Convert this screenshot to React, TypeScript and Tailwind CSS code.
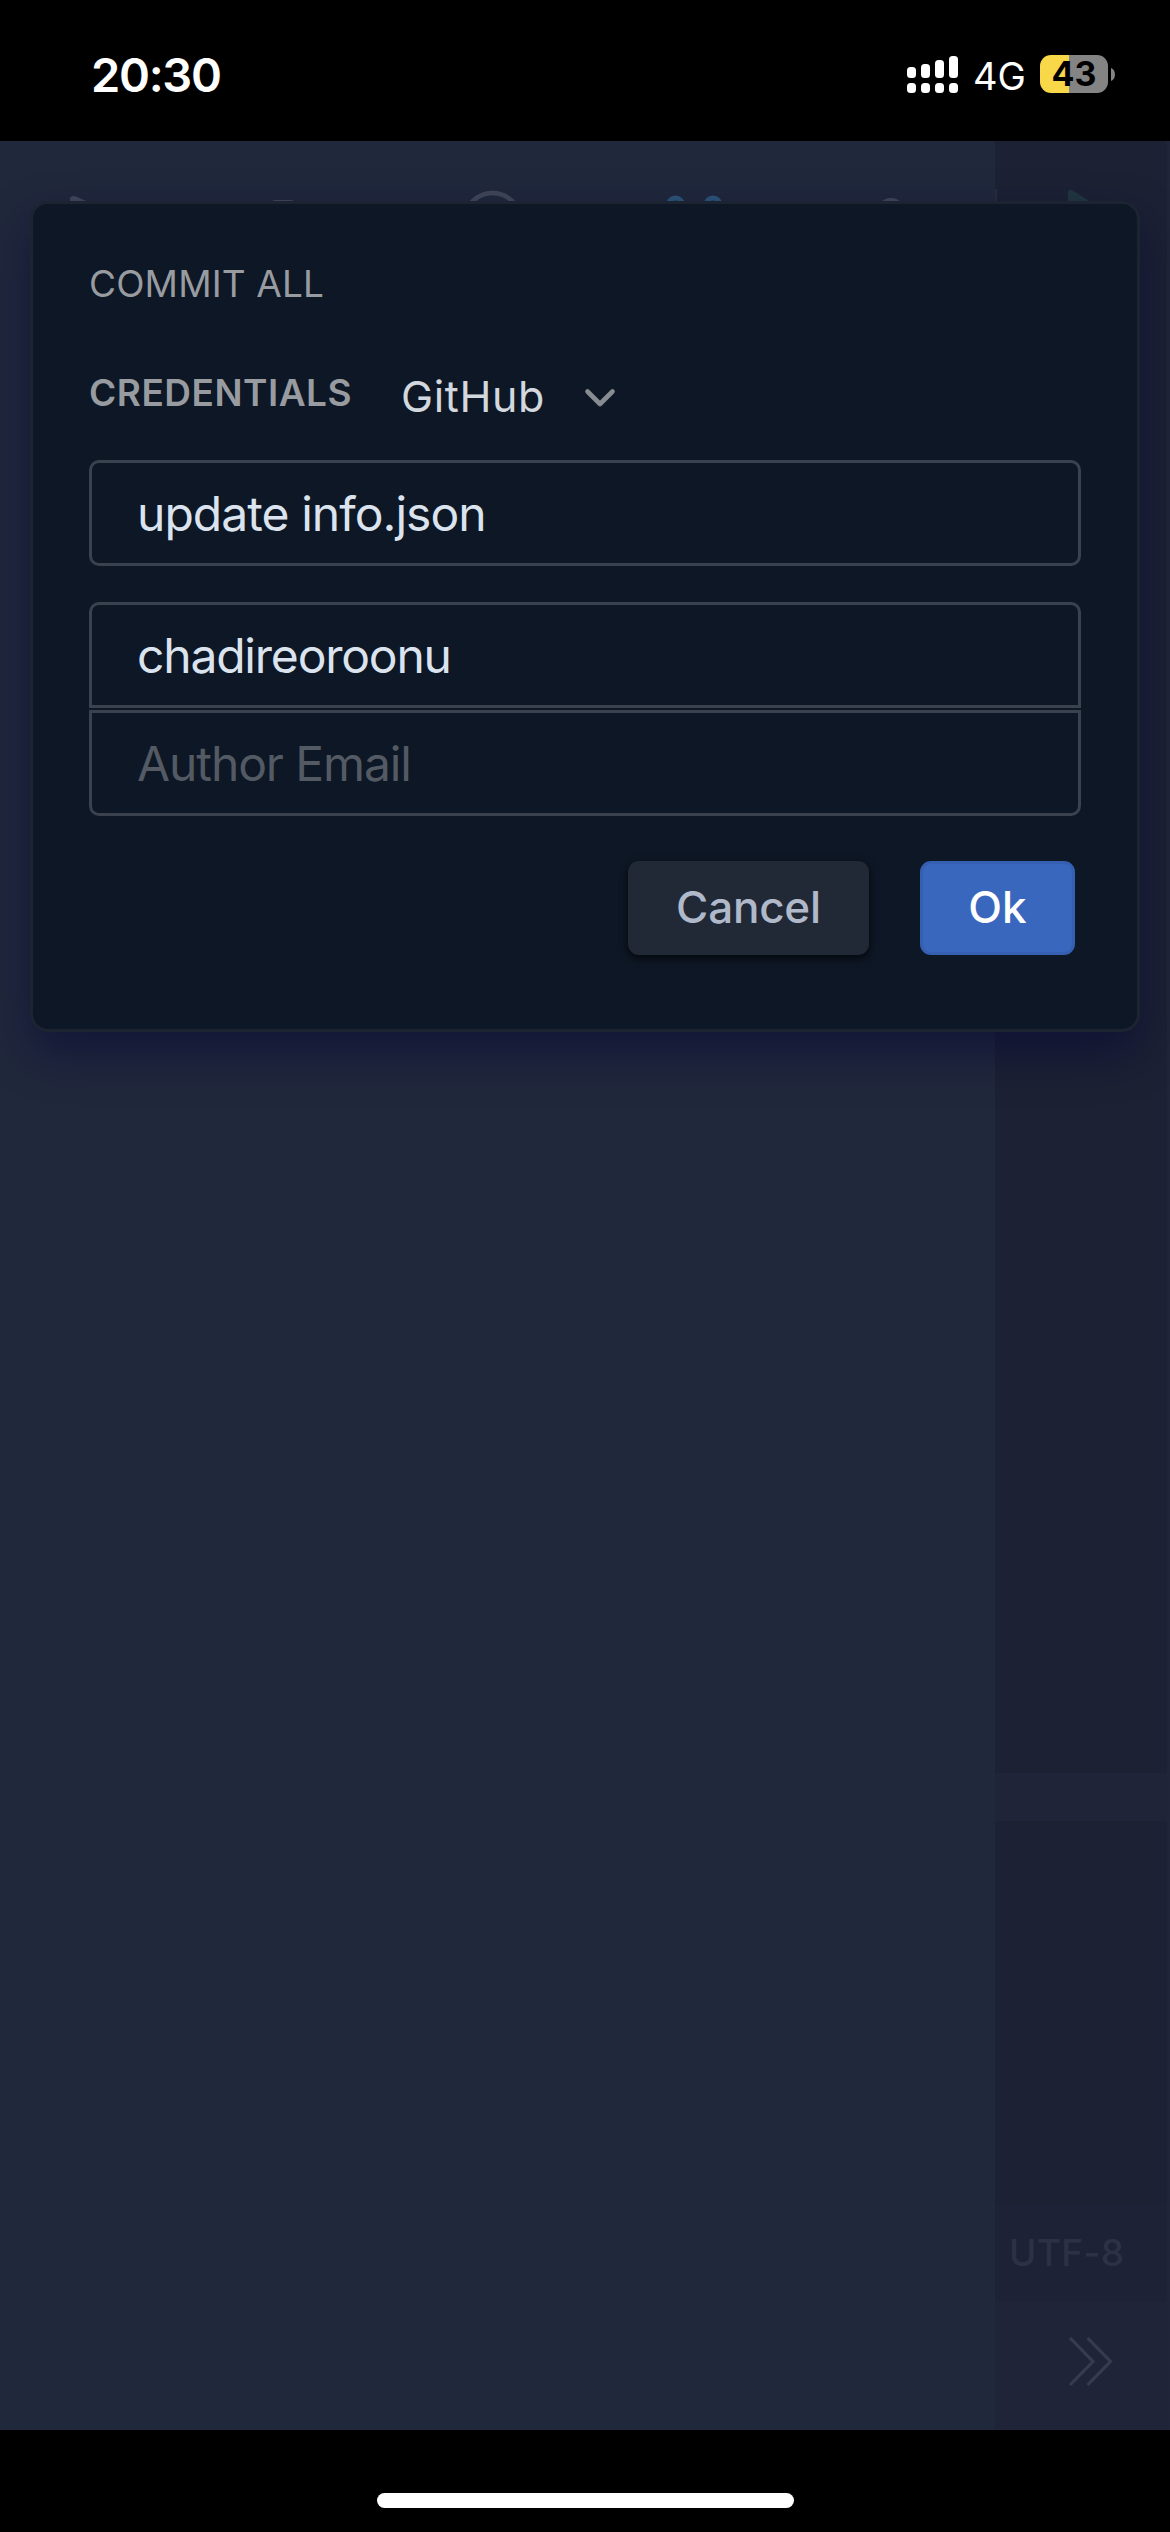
import type { ReactNode } from "react";

function StatusBar() {
  const bars = ["h-[11px]", "h-[14px]", "h-[18px]", "h-[22px]"];
  return (
    <header className="flex h-[141px] shrink-0 items-start justify-between bg-black pl-[91px] pr-[55px] text-white">
      <time className="mt-[51px] text-[47px] leading-[48px] font-semibold tracking-[-1.3px]">20:30</time>
      <div className="flex items-start">
        <div className="mt-[56px] flex h-[37px] items-end gap-[5px]">
          {bars.map((h) => (
            <div key={h} className="flex w-[9px] flex-col gap-[5px]">
              <span className={"rounded-[3.5px] bg-white " + h} />
              <span className="h-[10px] rounded-[3.5px] bg-white" />
            </div>
          ))}
        </div>
        <span className="mt-[57px] ml-[15px] w-[67px] text-[38px] leading-[38px]">4G</span>
        <div className="mt-[55px] flex h-[38px] w-[68px] items-center justify-center rounded-[11px] bg-[linear-gradient(90deg,#f8d748_29px,#848484_29px)] text-[34px] leading-[34px] font-bold text-black">
          43
        </div>
        <svg className="mt-[68px] ml-[3px]" width="4" height="13" viewBox="0 0 4 13">
          <path d="M0 0C5.3 2 5.3 11 0 13Z" fill="#848484" />
        </svg>
      </div>
    </header>
  );
}

function ToolCell({ children }: { children: ReactNode }) {
  return (
    <svg className="flex-1" height="80" viewBox="0 0 199 80" fill="none">
      {children}
    </svg>
  );
}

function Toolbar() {
  return (
    <div className="mt-10 flex w-[995px] text-[#41475a]">
      <ToolCell>
        <path d="M70 60V18Q70.500 14 76 15.500L116 33L93 40L86 60Z" fill="currentColor" />
      </ToolCell>
      <ToolCell>
        <rect x="73" y="19" width="22" height="30" rx="3" fill="currentColor" />
      </ToolCell>
      <ToolCell>
        <circle cx="94.500" cy="40" r="28" stroke="currentColor" strokeWidth="4.600" />
      </ToolCell>
      <ToolCell>
        <g stroke="#2d5379" strokeWidth="5">
          <circle cx="78.500" cy="24" r="7" />
          <circle cx="116" cy="24" r="7" />
        </g>
      </ToolCell>
      <ToolCell>
        <circle cx="95" cy="31" r="14" fill="currentColor" />
      </ToolCell>
    </div>
  );
}

function EditorStrip() {
  return (
    <div className="flex flex-1 flex-col border-r-[3px] border-[#202539] bg-[#1c2134]">
      <div className="mt-[48px] flex">
        <span className="h-12 w-0.5 bg-[#272c3f]" />
        <svg width="120" height="48" viewBox="0 0 120 48">
          <path d="M71 44V3Q71.500 0 75 1L108 22L75 44Z" fill="#21373f" />
        </svg>
      </div>
      <div className="mt-[1536px] h-[48px] bg-[#202438]" />
      <div className="mt-[382px] flex h-[99px] items-center bg-[#1e2236] pl-[14px]">
        <span className="text-[37px] leading-[37px] font-medium tracking-[0.3px] text-[#2c3145]">UTF-8</span>
      </div>
      <div className="flex flex-1 items-start bg-[#202438]">
        <svg className="mt-[35px] ml-[73px]" width="48" height="50" viewBox="0 0 48 50" fill="none" stroke="#373b4e" strokeWidth="3.200">
          <path d="M2 1L25 24.500L2 48M19.500 1L42.500 24.500L19.500 48" />
        </svg>
      </div>
    </div>
  );
}

const field = "block h-[106px] w-full border-[3px] border-[#3a4250] bg-transparent pb-0 text-[48px] outline-none placeholder:text-[#535a64] placeholder:opacity-100";

function CommitDialog() {
  return (
    <section
      role="dialog"
      className="absolute top-[60px] left-[30px] flex h-[831px] w-[1110px] flex-col rounded-[18px] border-[3px] border-[#1b2430] bg-[#0e1725] px-[56px] shadow-[0_21px_48px_rgba(0,0,50,0.45)]"
    >
      <h1 className="mt-[61px] text-[37px] leading-[37px] tracking-[0.13px] text-[#989ca1]">COMMIT ALL</h1>
      <div className="mt-[67px] flex h-[50px] items-center">
        <span className="relative top-[-2px] text-[37px] leading-[37px] font-semibold tracking-[0.5px] text-[#989ca1]">CREDENTIALS</span>
        <button className="relative top-[2px] ml-[49px] flex items-center text-[43px] leading-[50px] tracking-[0.61px] text-[#d3d7de]">
          GitHub
          <svg className="mt-[3px] ml-[38px]" width="34" height="22" viewBox="0 0 34 22" fill="none" stroke="#878b92" strokeWidth="4.600" strokeLinecap="round" strokeLinejoin="round">
            <path d="M4.500 4.500L17 17L29.500 4.500" />
          </svg>
        </button>
      </div>
      <input className={field + " mt-[41px] rounded-[10px] pl-[45px] tracking-[-0.95px] text-[#dbe4ee]"} defaultValue="update info.json" />
      <input className={field + " mt-[36px] rounded-t-[10px] pt-[1px] pl-[45px] tracking-[-1.2px] text-[#dbe4ee]"} defaultValue="chadireoroonu" />
      <input className={field + " mt-[2px] rounded-b-[10px] pl-[45px] tracking-[-1.1px]"} placeholder="Author Email" />
      <div className="mt-[45px] mr-[6px] flex justify-end gap-[51px] text-[44px] leading-[44px] font-medium">
        <button className="h-[94px] w-[241px] rounded-[11px] bg-[#212936] pb-[2px] tracking-[-0.21px] text-[#b0b9ca] shadow-[0_3px_9px_rgba(0,0,0,0.7)]">Cancel</button>
        <button className="h-[94px] w-[155px] rounded-[11px] border-[3px] border-[#3560b2] bg-[#3967bd] pb-[2px] text-white">Ok</button>
      </div>
    </section>
  );
}

export default function App() {
  return (
    <div className="flex h-[2532px] w-[1170px] flex-col overflow-hidden bg-black font-[Inter,sans-serif]">
      <StatusBar />
      <main className="relative flex h-[2289px] shrink-0 overflow-hidden">
        <div className="w-[995px] bg-[#20283c]">
          <Toolbar />
        </div>
        <EditorStrip />
        <CommitDialog />
      </main>
      <footer className="flex h-[102px] shrink-0 justify-center bg-black">
        <div className="mt-[63px] h-[15px] w-[417px] rounded-full bg-white" />
      </footer>
    </div>
  );
}
